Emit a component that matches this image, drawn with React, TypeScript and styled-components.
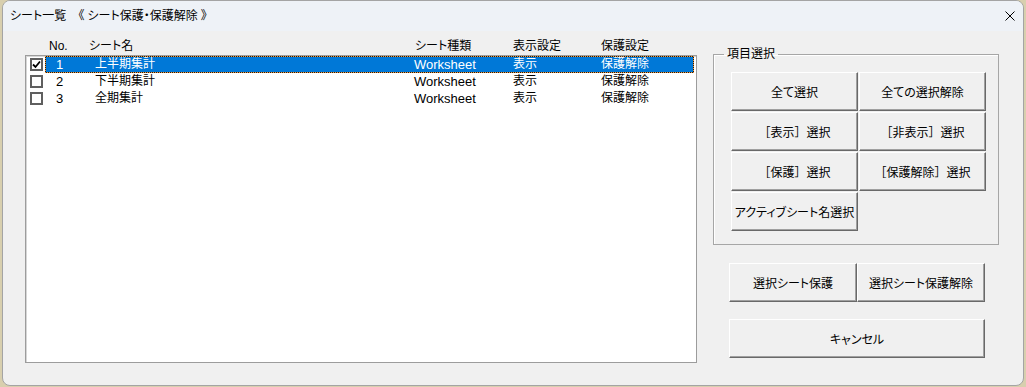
import React from 'react';
import styled, { createGlobalStyle } from 'styled-components';

const GlobalStyle = createGlobalStyle`
  html, body {
    margin: 0;
    padding: 0;
    background: #d8cfae;
  }
  body {
    font-family: "Liberation Sans", "Noto Sans CJK JP", sans-serif;
    font-size: 12px;
    color: #000;
    font-feature-settings: "palt";
  }
`;

const Window = styled.div`
  box-sizing: border-box;
  margin-left: 2px;
  width: 1022px;
  height: 386px;
  border: 1px solid #a4a4a4;
  border-radius: 8px;
  overflow: hidden;
  background: #f0f0f0;
  display: flex;
  flex-direction: column;
`;

const TitleBar = styled.div`
  height: 30px;
  flex: none;
  background: #eef2f7;
  display: flex;
  align-items: center;
  justify-content: space-between;
  padding: 0 8px 0 7px;
  line-height: 16px;
`;

const CloseIcon = styled.svg`
  width: 10px;
  height: 10px;
  display: block;
`;

const Client = styled.div`
  flex: 1;
  display: flex;
  align-items: flex-start;
  gap: 16px;
  padding: 7px 0 0 22px;
`;

const LeftColumn = styled.div`
  width: 672px;
  display: flex;
  flex-direction: column;
`;

const Header = styled.div`
  height: 17px;
  display: flex;
  align-items: center;
  padding-left: 24px;
  line-height: 17px;
`;

const HeadCell = styled.div<{ $w?: number }>`
  flex: ${({ $w }) => ($w ? 'none' : '1')};
  width: ${({ $w }) => ($w ? `${$w}px` : 'auto')};
  white-space: nowrap;
`;

const ListBox = styled.div`
  box-sizing: border-box;
  height: 308px;
  background: #fff;
  border: 1px solid #9c9c9c;
  box-shadow: inset 1px 1px 0 #d6d6d6;
  display: flex;
  flex-direction: column;
`;

const Row = styled.div`
  height: 17px;
  display: flex;
  align-items: center;
`;

const CheckCell = styled.div`
  width: 19px;
  flex: none;
  display: flex;
  align-items: center;
  padding-left: 4px;
  box-sizing: border-box;
`;

const CheckBox = styled.div`
  box-sizing: border-box;
  width: 13px;
  height: 13px;
  border: 2px solid #5f5f5f;
  background: #fff;
  display: flex;
  align-items: center;
  justify-content: center;
`;

const RowBody = styled.div<{ $selected?: boolean }>`
  box-sizing: border-box;
  flex: 1;
  margin-right: 2px;
  height: 17px;
  display: flex;
  align-items: center;
  padding-left: 10px;
  line-height: 15px;
  border: 1px ${({ $selected }) => ($selected ? 'dotted #f09a3a' : 'solid transparent')};
  background: ${({ $selected }) =>
    $selected ? 'linear-gradient(#0078d7, #0078d7) padding-box, #1b1b1b border-box' : 'transparent'};
  color: ${({ $selected }) => ($selected ? '#fff' : '#000')};
`;

const Cell = styled.div<{ $w?: number; $latin?: boolean }>`
  flex: ${({ $w }) => ($w ? 'none' : '1')};
  width: ${({ $w }) => ($w ? `${$w}px` : 'auto')};
  font-size: ${({ $latin }) => ($latin ? '13px' : '12px')};
  white-space: nowrap;
`;

const RightColumn = styled.div`
  width: 286px;
  padding-top: 8px;
  display: flex;
  flex-direction: column;
`;

const Frame = styled.fieldset`
  margin: 0;
  padding: 10px 12px 13px 17px;
  border: 1px solid #a6a6a6;
  box-shadow: inset 1px 1px 0 #fff;
  min-width: 0;
`;

const Legend = styled.legend`
  margin-left: -7px;
  padding: 0 3px;
  line-height: 16px;
`;

const ButtonGrid = styled.div`
  display: grid;
  grid-template-columns: 127px 127px;
  grid-auto-rows: 39px;
  column-gap: 1px;
  row-gap: 1px;
`;

const Button = styled.button<{ $w?: number; $full?: boolean }>`
  box-sizing: border-box;
  width: ${({ $w }) => ($w ? `${$w}px` : '100%')};
  height: 39px;
  margin: 0;
  padding: 0;
  background: #f0f0f0;
  border-style: solid;
  border-width: 1px;
  border-color: #ffffff #696969 #696969 #ffffff;
  box-shadow: inset -1px -1px 0 #a0a0a0;
  font-family: "Liberation Sans", "Noto Sans CJK JP", sans-serif;
  font-size: 12px;
  color: #000;
  font-feature-settings: ${({ $full }) => ($full ? 'normal' : '"palt"')};
  white-space: nowrap;
  cursor: default;
`;

const ActionRow = styled.div`
  display: flex;
  margin: 18px 0 0 16px;
`;

const CancelRow = styled.div`
  margin: 17px 0 0 16px;
`;

const sheets = [
  { no: 1, name: '上半期集計', type: 'Worksheet', visible: '表示', protect: '保護解除', checked: true },
  { no: 2, name: '下半期集計', type: 'Worksheet', visible: '表示', protect: '保護解除', checked: false },
  { no: 3, name: '全期集計', type: 'Worksheet', visible: '表示', protect: '保護解除', checked: false },
];

const Check = () => (
  <svg width="9" height="9" viewBox="0 0 9 9">
    <path d="M1 4.5 L3.5 7 L8 1.5" fill="none" stroke="#000" strokeWidth="1.8" />
  </svg>
);

export default function App() {
  return (
    <>
      <GlobalStyle />
      <Window>
        <TitleBar>
          <span>シート一覧　《 シート保護・保護解除 》</span>
          <CloseIcon viewBox="0 0 10 10">
            <path d="M0.5 0.5 L9.5 9.5 M9.5 0.5 L0.5 9.5" stroke="#000" strokeWidth="1" />
          </CloseIcon>
        </TitleBar>
        <Client>
          <LeftColumn>
            <Header>
              <HeadCell $w={40}>No.</HeadCell>
              <HeadCell $w={326}>シート名</HeadCell>
              <HeadCell $w={98}>シート種類</HeadCell>
              <HeadCell $w={88}>表示設定</HeadCell>
              <HeadCell>保護設定</HeadCell>
            </Header>
            <ListBox>
              {sheets.map((s) => (
                <Row key={s.no}>
                  <CheckCell>
                    <CheckBox>{s.checked && <Check />}</CheckBox>
                  </CheckCell>
                  <RowBody $selected={s.checked}>
                    <Cell $w={39} $latin>{s.no}</Cell>
                    <Cell $w={319}>{s.name}</Cell>
                    <Cell $w={99} $latin>{s.type}</Cell>
                    <Cell $w={88}>{s.visible}</Cell>
                    <Cell>{s.protect}</Cell>
                  </RowBody>
                </Row>
              ))}
            </ListBox>
          </LeftColumn>
          <RightColumn>
            <Frame>
              <Legend>項目選択</Legend>
              <ButtonGrid>
                <Button>全て選択</Button>
                <Button>全ての選択解除</Button>
                <Button $full>［表示］選択</Button>
                <Button $full>［非表示］選択</Button>
                <Button $full>［保護］選択</Button>
                <Button $full>［保護解除］選択</Button>
                <Button>アクティブシート名選択</Button>
              </ButtonGrid>
            </Frame>
            <ActionRow>
              <Button $w={128}>選択シート保護</Button>
              <Button $w={128}>選択シート保護解除</Button>
            </ActionRow>
            <CancelRow>
              <Button $w={256}>キャンセル</Button>
            </CancelRow>
          </RightColumn>
        </Client>
      </Window>
    </>
  );
}
